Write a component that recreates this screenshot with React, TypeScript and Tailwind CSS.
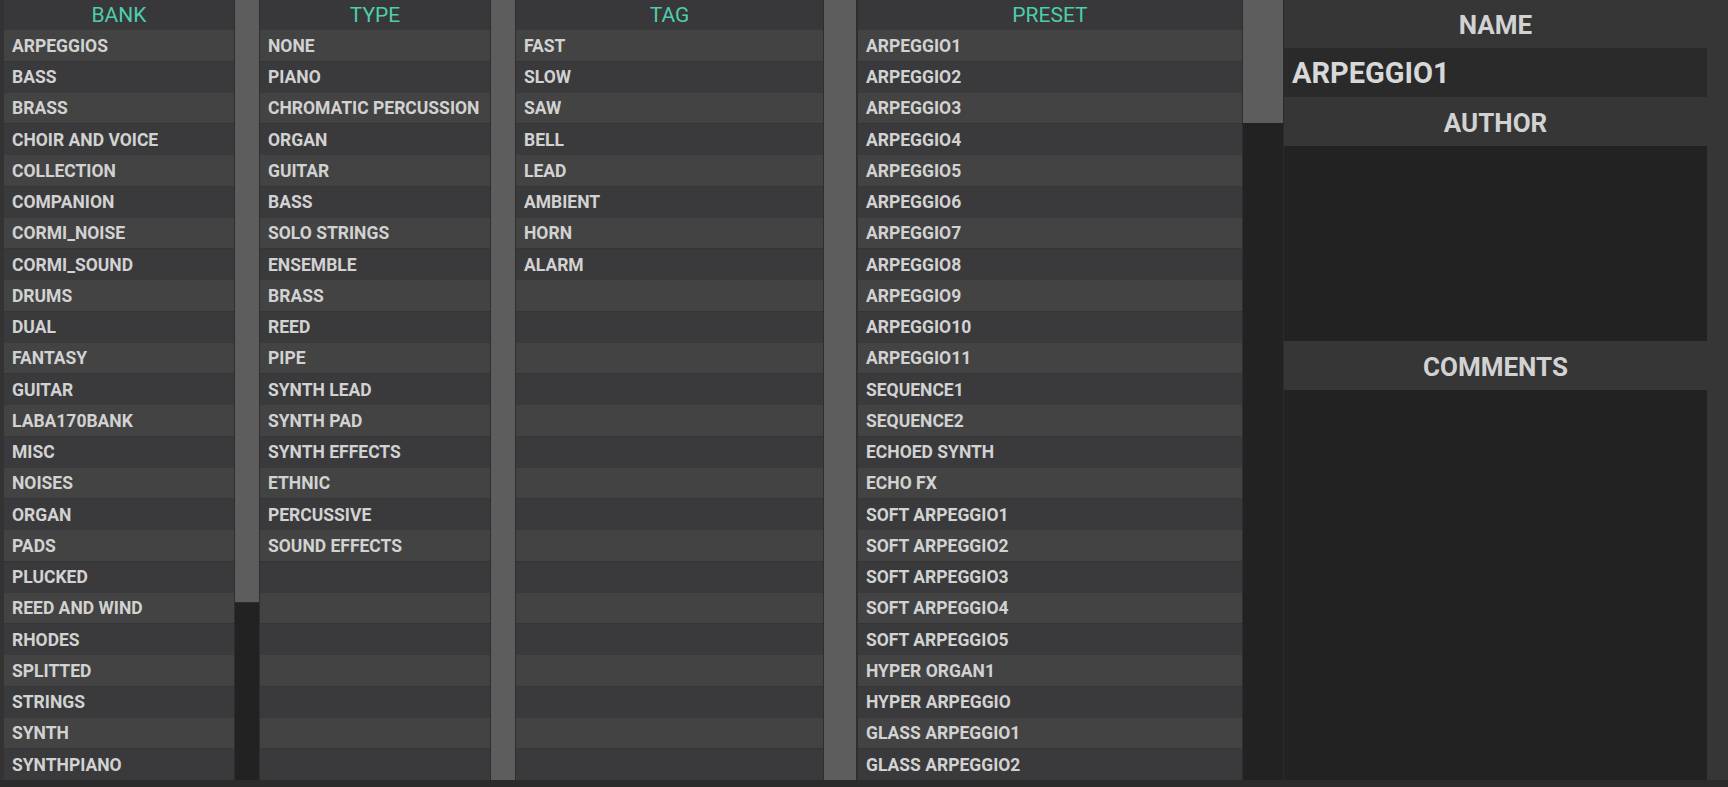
import React from "react";

const bank = ["ARPEGGIOS","BASS","BRASS","CHOIR AND VOICE","COLLECTION","COMPANION","CORMI_NOISE","CORMI_SOUND","DRUMS","DUAL","FANTASY","GUITAR","LABA170BANK","MISC","NOISES","ORGAN","PADS","PLUCKED","REED AND WIND","RHODES","SPLITTED","STRINGS","SYNTH","SYNTHPIANO"];
const types = ["NONE","PIANO","CHROMATIC PERCUSSION","ORGAN","GUITAR","BASS","SOLO STRINGS","ENSEMBLE","BRASS","REED","PIPE","SYNTH LEAD","SYNTH PAD","SYNTH EFFECTS","ETHNIC","PERCUSSIVE","SOUND EFFECTS"];
const tags = ["FAST","SLOW","SAW","BELL","LEAD","AMBIENT","HORN","ALARM"];
const presets = ["ARPEGGIO1","ARPEGGIO2","ARPEGGIO3","ARPEGGIO4","ARPEGGIO5","ARPEGGIO6","ARPEGGIO7","ARPEGGIO8","ARPEGGIO9","ARPEGGIO10","ARPEGGIO11","SEQUENCE1","SEQUENCE2","ECHOED SYNTH","ECHO FX","SOFT ARPEGGIO1","SOFT ARPEGGIO2","SOFT ARPEGGIO3","SOFT ARPEGGIO4","SOFT ARPEGGIO5","HYPER ORGAN1","HYPER ARPEGGIO","GLASS ARPEGGIO1","GLASS ARPEGGIO2"];

function ListCol({ title, items, w }: { title: string; items: string[]; w: string }) {
  const rows = Array.from({ length: 24 }, (_, i) => items[i] ?? "");
  return (
    <div className={`flex h-full flex-col ${w}`}>
      <div className="flex h-[30px] shrink-0 items-center justify-center bg-[#38383a] text-[21px] leading-none text-[#4ecdac]">
        {title}
      </div>
      <div className="flex flex-1 flex-col">
        {rows.map((t, i) => (
          <div
            key={i}
            className={`flex flex-1 items-center whitespace-nowrap px-2 pt-[2px] text-[17.5px] font-bold leading-none text-[#d2d2d2] ${
              i % 2 === 0 ? "bg-[#434343] border-b border-[#353537]" : "bg-[#3a3a3c]"
            }`}
          >
            {t}
          </div>
        ))}
      </div>
    </div>
  );
}

function Scroll({ w, thumb }: { w: string; thumb: string }) {
  return (
    <div className={`flex h-full flex-col bg-[#222222] ${w}`}>
      <div className={`bg-[#5d5d5d] ${thumb}`} />
    </div>
  );
}

export default function App() {
  return (
    <div
      className="flex h-[787px] w-[1728px] flex-col overflow-hidden bg-[#2b2b2b]"
      style={{ fontFamily: "Roboto, 'Liberation Sans', sans-serif" }}
    >
      <div className="flex h-[780px] bg-[#333333] pl-[4px]">
        <ListCol title="BANK" items={bank} w="w-[230px]" />
        <div className="w-px bg-[#2e2e2e]" />
        <Scroll w="w-[24px]" thumb="h-[603px] border-b border-[#2e2e2e]" />
        <div className="w-px bg-[#2e2e2e]" />
        <ListCol title="TYPE" items={types} w="w-[230px]" />
        <div className="w-px bg-[#2e2e2e]" />
        <Scroll w="w-[24px]" thumb="h-full" />
        <div className="w-px bg-[#2e2e2e]" />
        <ListCol title="TAG" items={tags} w="w-[307px]" />
        <div className="w-px bg-[#2e2e2e]" />
        <Scroll w="w-[32px]" thumb="h-full" />
        <div className="w-[2px] bg-[#2e2e2e]" />
        <ListCol title="PRESET" items={presets} w="w-[384px]" />
        <div className="w-px bg-[#2e2e2e]" />
        <Scroll w="w-[40px]" thumb="h-[123px]" />
        <div className="w-px bg-[#2c2c2c]" />
        <div className="flex flex-1 flex-col bg-[#363636] pr-[21px]">
          <div className="flex h-[48px] items-center justify-center pt-[2px] text-[26px] font-bold leading-none text-[#d2d2d2]">NAME</div>
          <div className="flex h-[49px] items-center bg-[#2a2a2a] px-2 pt-[2px] text-[29px] font-bold leading-none text-[#d8d8d8]">ARPEGGIO1</div>
          <div className="flex h-[49px] items-center justify-center pt-[2px] text-[26px] font-bold leading-none text-[#d2d2d2]">AUTHOR</div>
          <div className="h-[195px] bg-[#222222]" />
          <div className="flex h-[49px] items-center justify-center pt-[2px] text-[26px] font-bold leading-none text-[#d2d2d2]">COMMENTS</div>
          <div className="flex-1 bg-[#222222]" />
        </div>
      </div>
      <div className="flex-1 bg-[#2b2b2b]" />
    </div>
  );
}
